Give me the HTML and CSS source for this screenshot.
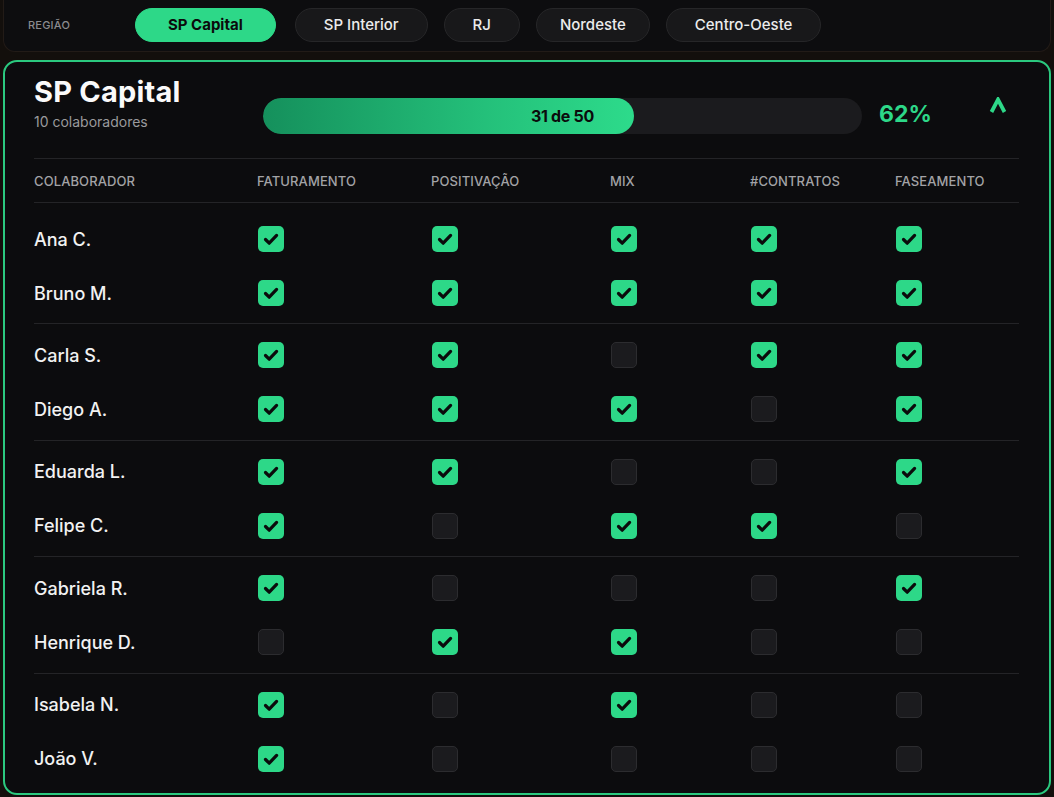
FILE: index.html
```html
<!DOCTYPE html>
<html lang="pt">
<head>
<meta charset="utf-8">
<link rel="stylesheet" href="styles.css">
</head>
<body>
<div class="topbar">
  <span class="label">REGIÃO</span>
  <div class="pills">
    <button class="pill active">SP Capital</button>
    <button class="pill">SP Interior</button>
    <button class="pill">RJ</button>
    <button class="pill tight">Nordeste</button>
    <button class="pill">Centro-Oeste</button>
  </div>
</div>

<section class="card">
  <header class="card-head">
    <div class="title-block">
      <h1>SP Capital</h1>
      <p>10 colaboradores</p>
    </div>
    <div class="progress">
      <div class="fill" style="width:62%"></div>
      <span class="progress-text">31 de 50</span>
    </div>
    <div class="pct">62%</div>
    <div class="caret"><svg viewBox="0 0 18 16" width="18" height="16"><path d="M2.5 15 L9 2.5 L15.5 15" fill="none" stroke="#2dd888" stroke-width="3.8" stroke-linejoin="miter"/></svg></div>
  </header>

  <div class="grid head-row">
    <div>COLABORADOR</div><div>FATURAMENTO</div><div>POSITIVAÇÃO</div><div>MIX</div><div>#CONTRATOS</div><div>FASEAMENTO</div>
  </div>

  <div id="rows"></div>
</section>

<template id="box-on"><span class="box on"><svg viewBox="0 0 26 26" width="26" height="26"><path d="M7.5 13.5 L11.2 17.2 L18.6 9.4" fill="none" stroke="#0b0b0c" stroke-width="3.2" stroke-linecap="round" stroke-linejoin="round"/></svg></span></template>

<script>
const data = [
  ["Ana C.",[1,1,1,1,1]],
  ["Bruno M.",[1,1,1,1,1]],
  ["Carla S.",[1,1,0,1,1]],
  ["Diego A.",[1,1,1,0,1]],
  ["Eduarda L.",[1,1,0,0,1]],
  ["Felipe C.",[1,0,1,1,0]],
  ["Gabriela R.",[1,0,0,0,1]],
  ["Henrique D.",[0,1,1,0,0]],
  ["Isabela N.",[1,0,1,0,0]],
  ["João V.",[1,0,0,0,0]]
];
const on = document.getElementById('box-on').innerHTML;
let html = '';
for (let i = 0; i < data.length; i += 2) {
  html += '<div class="group">';
  for (const [name, vals] of data.slice(i, i + 2)) {
    html += '<div class="grid row"><div class="name">' + name + '</div>';
    for (const v of vals) html += '<div>' + (v ? on : '<span class="box"></span>') + '</div>';
    html += '</div>';
  }
  html += '</div>';
}
document.getElementById('rows').innerHTML = html;
</script>
</body>
</html>
```
FILE: styles.css
```css
* { box-sizing: border-box; }
html, body {
  margin: 0;
  padding: 0;
  background: #130f0c;
  font-family: "Inter", "Noto Sans", sans-serif;
  color: #f2f2f2;
}
body { padding: 0 3px; height: 797px; overflow: hidden; }

.topbar {
  height: 52px;
  background: #0d0d0f;
  border: 1px solid #221b17;
  border-top: none;
  border-radius: 0 0 12px 12px;
  display: flex;
  align-items: center;
  padding: 0 0 2px 24px;
}
.label {
  font-size: 11px;
  font-weight: 500;
  color: #8b8b8e;
  letter-spacing: 0.2px;
  width: 107px;
}
.pills { display: flex; gap: 16px; }
.pill {
  height: 34px;
  border-radius: 17px;
  border: 1px solid #262628;
  background: #18181a;
  color: #ececec;
  font-family: inherit;
  font-size: 15px;
  font-weight: 500;
  padding: 0 28px;
}
.pill.tight { padding: 0 23px; }
.pill.active {
  background: #2dd888;
  border-color: #2dd888;
  color: #0b0b0c;
  font-weight: 700;
  padding: 0 32px;
  margin-right: 3px;
}

.card {
  margin-top: 8px;
  height: 735px;
  border: 2px solid #2bc97f;
  border-radius: 14px;
  background: #0c0c0e;
  padding: 0 30px 0 29px;
}
.card-head {
  display: flex;
  align-items: flex-start;
  height: 97px;
  padding-top: 12px;
  border-bottom: 1px solid #242427;
}
.title-block { width: 229px; }
.title-block h1 {
  margin: 0;
  font-size: 29px;
  font-weight: 700;
  line-height: 36px;
  letter-spacing: 0.2px;
  color: #fafafa;
}
.title-block p {
  margin: 3px 0 0;
  font-size: 14px;
  color: #9a9a9d;
}
.progress {
  position: relative;
  margin-top: 24px;
  width: 599px;
  height: 36px;
  border-radius: 18px;
  background: #1b1b1e;
  overflow: hidden;
  display: flex;
  align-items: center;
  justify-content: center;
}
.fill {
  position: absolute;
  left: 0; top: 0; bottom: 0;
  border-radius: 18px;
  background: linear-gradient(90deg, #15905c 0%, #24c07a 60%, #2ddb8b 100%);
}
.progress-text {
  position: relative;
  font-size: 16px;
  font-weight: 700;
  color: #0b0b0c;
  letter-spacing: -0.3px;
}
.pct {
  margin-top: 22px;
  margin-left: 17px;
  line-height: 36px;
  font-size: 23px;
  font-weight: 700;
  color: #2dd888;
  width: 110px;
}
.caret { margin-top: 23px; }
.caret svg { display: block; }

.grid {
  display: grid;
  grid-template-columns: 223px 174px 179px 140px 145px 1fr;
  align-items: center;
}
.head-row {
  height: 44px;
  font-size: 13px;
  font-weight: 500;
  color: #a3a3a6;
  letter-spacing: 0.1px;
  border-bottom: 1px solid #242427;
}
#rows { padding-top: 5px; }
.group {
  padding: 4px 0 3.4px;
  border-bottom: 1px solid #242427;
}
.group:last-child { border-bottom: none; }
.row { height: 54px; }
.name { font-size: 18px; font-weight: 500; color: #f2f2f2; }
.box {
  display: block;
  width: 26px;
  height: 26px;
  border-radius: 5px;
  background: #1b1b1e;
  border: 1px solid #2c2c2f;
  margin-left: 1px;
}
.box.on {
  background: #2dd888;
  border: none;
}
.box svg { display: block; }
```
